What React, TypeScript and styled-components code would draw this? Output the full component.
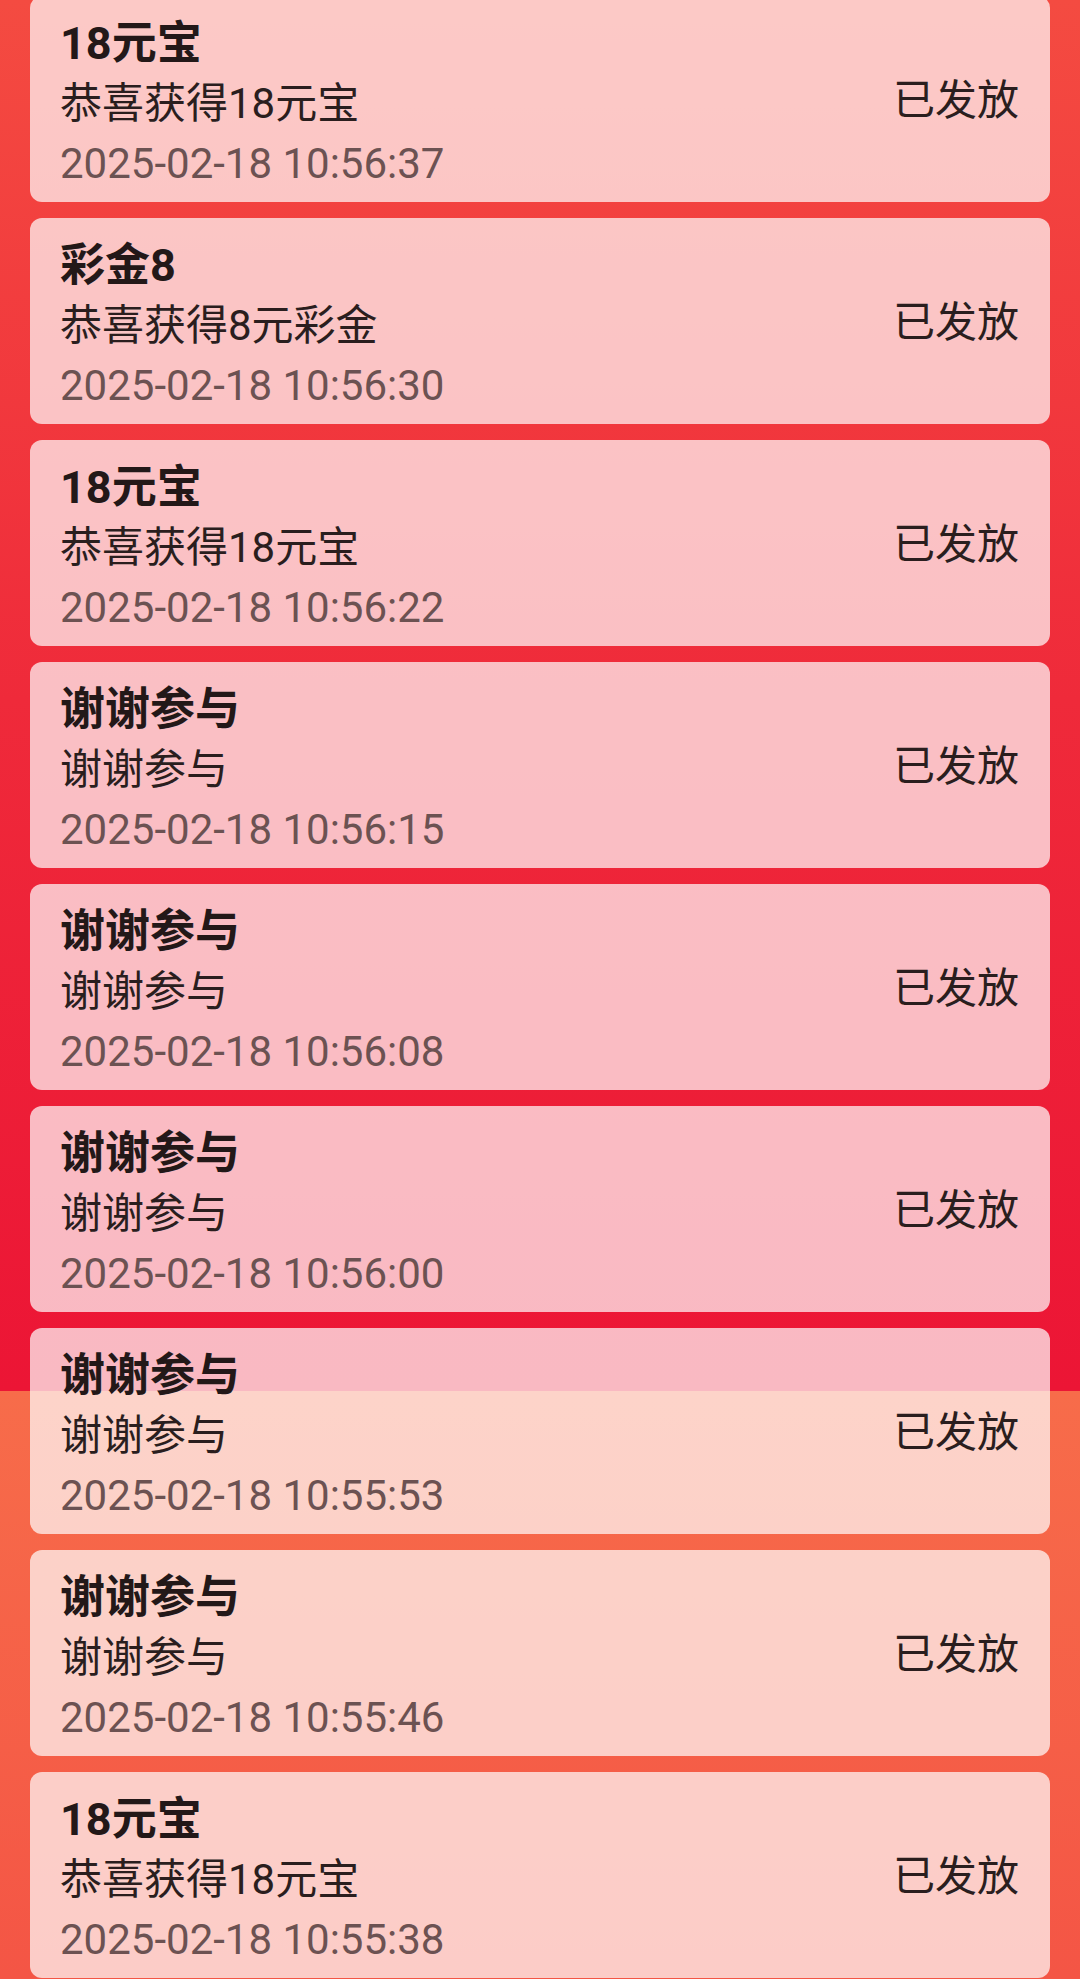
import React from "react";
import styled, { createGlobalStyle } from "styled-components";

const GlobalStyle = createGlobalStyle`
  html, body {
    margin: 0;
    padding: 0;
    background: #f45545;
  }
  * { box-sizing: border-box; }
`;

const Page = styled.div`
  min-height: 100vh;
  display: flex;
  flex-direction: column;
  padding: 0 30px;
  background: linear-gradient(
    to bottom,
    #f44b41 0px,
    #ef2a3a 700px,
    #ec1535 1391px,
    #f76c4a 1391px,
    #f45545 1979px
  );
  font-family: Roboto, "Noto Sans CJK SC", sans-serif;
  overflow: hidden;
`;

const List = styled.div`
  display: flex;
  flex-direction: column;
  gap: 16px;
  margin-top: -4px;
`;

const Card = styled.div`
  height: 206px;
  display: flex;
  align-items: center;
  justify-content: space-between;
  padding: 0 31px 0 30px;
  border-radius: 12px;
  background: rgba(255, 255, 255, 0.7);
`;

const Info = styled.div`
  display: flex;
  flex-direction: column;
  padding: 18px 0 10px;
  align-self: stretch;
`;

const Title = styled.div`
  font-size: 45px;
  line-height: 60px;
  font-weight: 700;
  color: #231818;
`;

const Desc = styled.div`
  font-size: 42px;
  line-height: 60px;
  color: #2a1e1e;
`;

const Time = styled.div`
  font-size: 42px;
  line-height: 60px;
  color: #6c5252;
`;

const Status = styled.div`
  margin-top: 4px;
  font-size: 42px;
  line-height: 60px;
  color: #2a1e1e;
`;

type Record = { title: string; desc: string; time: string };

const records: Record[] = [
  { title: "18元宝", desc: "恭喜获得18元宝", time: "2025-02-18 10:56:37" },
  { title: "彩金8", desc: "恭喜获得8元彩金", time: "2025-02-18 10:56:30" },
  { title: "18元宝", desc: "恭喜获得18元宝", time: "2025-02-18 10:56:22" },
  { title: "谢谢参与", desc: "谢谢参与", time: "2025-02-18 10:56:15" },
  { title: "谢谢参与", desc: "谢谢参与", time: "2025-02-18 10:56:08" },
  { title: "谢谢参与", desc: "谢谢参与", time: "2025-02-18 10:56:00" },
  { title: "谢谢参与", desc: "谢谢参与", time: "2025-02-18 10:55:53" },
  { title: "谢谢参与", desc: "谢谢参与", time: "2025-02-18 10:55:46" },
  { title: "18元宝", desc: "恭喜获得18元宝", time: "2025-02-18 10:55:38" },
];

export default function App() {
  return (
    <>
      <GlobalStyle />
      <Page>
        <List>
          {records.map((r, i) => (
            <Card key={i}>
              <Info>
                <Title>{r.title}</Title>
                <Desc>{r.desc}</Desc>
                <Time>{r.time}</Time>
              </Info>
              <Status>已发放</Status>
            </Card>
          ))}
        </List>
      </Page>
    </>
  );
}
